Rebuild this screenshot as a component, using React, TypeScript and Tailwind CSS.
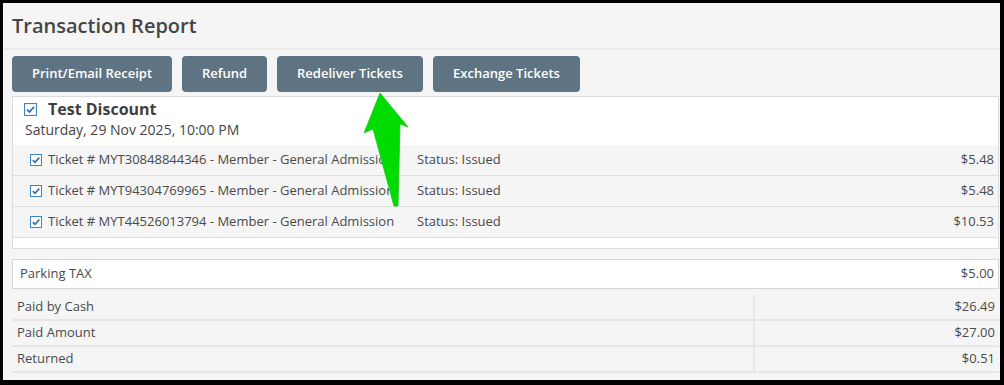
import React from "react";

const Check = ({ size = 12 }: { size?: number }) => (
    <svg width={size} height={size} viewBox="0 0 12 12" className="shrink-0">
        <rect x="0.5" y="0.5" width="11" height="11" fill="white" stroke="#3d86c6" />
        <path d="M2.8 6.2 L5 8.3 L9.3 3.6" fill="none" stroke="#2d6fb0" strokeWidth="1.6" />
    </svg>
);

const App = () => {
    const buttons = [
        { label: "Print/Email Receipt", w: "w-[160px]" },
        { label: "Refund", w: "w-[85px]" },
        { label: "Redeliver Tickets", w: "w-[146px]" },
        { label: "Exchange Tickets", w: "w-[147px]" },
    ];

    const tickets = [
        { no: "MYT30848844346", amount: "$5.48" },
        { no: "MYT94304769965", amount: "$5.48" },
        { no: "MYT44526013794", amount: "$10.53" },
    ];

    const paid = [
        { label: "Paid by Cash", amount: "$26.49" },
        { label: "Paid Amount", amount: "$27.00" },
        { label: "Returned", amount: "$0.51" },
    ];

    return (
        <div className="w-[1004px] h-[385px] bg-black pt-[3px] pl-[3px] pr-[4px] pb-[5px] font-['Open_Sans',sans-serif]">
            <div className="relative h-full bg-[#f5f5f5] pl-[9px] pr-[1px] overflow-hidden">
                <div className="h-[45px] flex items-center">
                    <h1 className="text-[20px] font-semibold text-[#454545] leading-none">
                        Transaction Report
                    </h1>
                </div>
                <div className="-ml-[9px] -mr-[1px] border-b-2 border-[#ebebeb]"></div>

                <div className="flex gap-[10px] mt-[6px]">
                    {buttons.map((b) => (
                        <div
                            key={b.label}
                            className={`${b.w} h-[36px] rounded-[4px] bg-[#5f7482] text-white text-[13px] font-semibold flex items-center justify-center`}
                        >
                            {b.label}
                        </div>
                    ))}
                </div>

                <div className="mt-[4px] bg-white border border-[#dcdcdc]">
                    <div className="pl-[11px] pt-[1px] pb-[5px]">
                        <div className="flex items-center gap-[11px] h-[22px]">
                            <Check size={13} />
                            <span className="text-[16px] font-bold text-[#3f3f3f]">Test Discount</span>
                        </div>
                        <div className="text-[14px] text-[#444] leading-[20px] pl-[1px]">
                            Saturday, 29 Nov 2025, 10:00 PM
                        </div>
                    </div>
                    <div>
                        {tickets.map((t) => (
                            <div
                                key={t.no}
                                className="h-[31px] bg-[#f5f5f5] border-b border-[#dedede] flex items-center text-[13px] text-[#4a4a4a] pl-[17px] pr-[4px]"
                            >
                                <Check />
                                <span className="ml-[6px] w-[369px] whitespace-nowrap overflow-hidden">
                                    Ticket # {t.no} - Member - General Admission
                                </span>
                                <span className="flex-1">Status: Issued</span>
                                <span>{t.amount}</span>
                            </div>
                        ))}
                    </div>
                    <div className="h-[10px]"></div>
                </div>

                <div className="mt-[10px] h-[30px] bg-white border border-[#d6d6d6] flex items-center justify-between pl-[7px] pr-[4px] text-[13px] text-[#4a4a4a]">
                    <span>Parking TAX</span>
                    <span>$5.00</span>
                </div>

                <div className="mt-[6px] grid grid-cols-[741px_1fr] gap-[2px] bg-[#e6e6e6] border-b-2 border-[#e6e6e6] text-[13px] text-[#4a4a4a]">
                    {paid.map((p) => (
                        <React.Fragment key={p.label}>
                            <div className="h-[24px] bg-[#f5f5f5] flex items-center pl-[5px]">{p.label}</div>
                            <div className="h-[24px] bg-[#f5f5f5] flex items-center justify-end pr-[4px]">{p.amount}</div>
                        </React.Fragment>
                    ))}
                </div>

                <svg className="absolute left-0 top-0 pointer-events-none" width="997" height="377">
                    <g transform="translate(-3,-3)">
                        <polygon
                            points="380,93 408,127 400,124 398,206 394,206 373,129 364,133"
                            fill="#00dc00"
                            stroke="#1cc41c"
                            strokeWidth="0.8"
                        />
                    </g>
                </svg>
            </div>
        </div>
    );
};

export default App;
